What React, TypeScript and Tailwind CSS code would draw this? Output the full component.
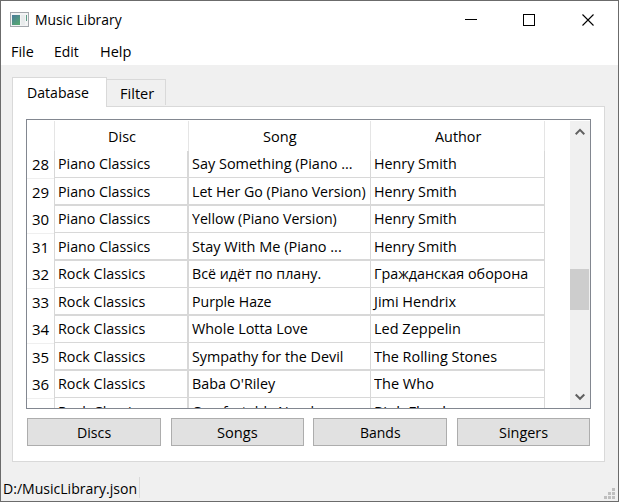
import { useLayoutEffect, useRef, useState } from "react";

// Text condensed horizontally so that it takes exactly `w` pixels.
function Fit({ w, children }: { w: number; children: string }) {
  const ref = useRef<HTMLSpanElement>(null);
  const [scale, setScale] = useState(1);
  useLayoutEffect(() => {
    if (ref.current) setScale(w / ref.current.offsetWidth);
  }, [w]);
  return (
    <span className="inline-block text-left align-top whitespace-nowrap" style={{ width: w }}>
      <span ref={ref} className="inline-block origin-left align-top" style={{ transform: `scaleX(${scale})` }}>
        {children}
      </span>
    </span>
  );
}

type Cell = [string, number];
const PIANO: Cell = ["Piano Classics", 92];
const ROCK: Cell = ["Rock Classics", 87];
const HENRY: Cell = ["Henry Smith", 83];

const rows: { n: string; disc: Cell; song: Cell; author: Cell }[] = [
  { n: "28", disc: PIANO, song: ["Say Something (Piano ...", 161], author: HENRY },
  { n: "29", disc: PIANO, song: ["Let Her Go (Piano Version)", 174], author: HENRY },
  { n: "30", disc: PIANO, song: ["Yellow (Piano Version)", 145], author: HENRY },
  { n: "31", disc: PIANO, song: ["Stay With Me (Piano ...", 150], author: HENRY },
  { n: "32", disc: ROCK, song: ["Всё идёт по плану.", 129], author: ["Гражданская оборона", 154] },
  { n: "33", disc: ROCK, song: ["Purple Haze", 80], author: ["Jimi Hendrix", 82] },
  { n: "34", disc: ROCK, song: ["Whole Lotta Love", 116], author: ["Led Zeppelin", 87] },
  { n: "35", disc: ROCK, song: ["Sympathy for the Devil", 151], author: ["The Rolling Stones", 123] },
  { n: "36", disc: ROCK, song: ["Baba O'Riley", 83], author: ["The Who", 60] },
  { n: "37", disc: ROCK, song: ["Comfortably Numb", 127], author: ["Pink Floyd", 72] },
];

const buttons: { label: string; w: number; cls: string }[] = [
  { label: "Discs", w: 34, cls: "w-[134px]" },
  { label: "Songs", w: 41, cls: "ml-[10px] w-[133px]" },
  { label: "Bands", w: 41, cls: "ml-[9px] w-[134px]" },
  { label: "Singers", w: 49, cls: "ml-[10px] w-[133px]" },
];

function TitleBar() {
  return (
    <div className="flex h-[37px] shrink-0 items-center pl-[9px]">
      <svg width="19" height="16" viewBox="0 0 19 16" shapeRendering="crispEdges">
        <defs>
          <linearGradient id="app" x1="0" y1="0" x2="0.6" y2="1">
            <stop offset="0" stopColor="#4a7a9b" />
            <stop offset="1" stopColor="#55a574" />
          </linearGradient>
        </defs>
        <rect x="0.5" y="0.5" width="18" height="14" fill="#f3f4f5" stroke="#a3a7ac" />
        <rect x="2" y="3" width="8" height="10" fill="url(#app)" />
        <rect x="11" y="3" width="4" height="10" fill="#e8ebec" />
        <rect x="16" y="3" width="1" height="6" fill="#5d9c86" />
      </svg>
      <span className="mb-[2px] ml-[6px]"><Fit w={87}>Music Library</Fit></span>
      <svg className="ml-auto mr-[23px]" width="130" height="12" viewBox="0 0 130 12" fill="none" stroke="#000">
        <path d="M0 5.5H12M58.5 0.5H69.5V11.5H58.5Z" shapeRendering="crispEdges" />
        <path d="M117.5 0.5L128.5 11.5M128.5 0.5L117.5 11.5" strokeWidth="1.1" />
      </svg>
    </div>
  );
}

function ScrollBar() {
  return (
    <div className="mt-px flex w-5 flex-col items-center bg-[#f0f0f0]">
      <svg className="mt-[7px]" width="10" height="8" viewBox="0 0 10 8" fill="none" stroke="#606060" strokeWidth="2">
        <path d="M0.7 6.2L5 1.9L9.3 6.2" />
      </svg>
      <div className="mt-[133px] mr-px h-[41px] w-[19px] bg-[#cdcdcd]" />
      <svg className="mt-auto mb-[7px]" width="10" height="8" viewBox="0 0 10 8" fill="none" stroke="#606060" strokeWidth="2">
        <path d="M0.7 1.5L5 5.8L9.3 1.5" />
      </svg>
    </div>
  );
}

function Table() {
  return (
    <div className="flex h-[290px] w-[565px] justify-between overflow-hidden border border-[#828790]">
      <div className="flex w-[518px] flex-col">
        <div className="mt-px flex h-[30px] shrink-0 pl-[27px] text-center leading-[31px]">
          <div className="w-[134px] border-l border-[#e5e5e5]"><Fit w={28}>Disc</Fit></div>
          <div className="w-[182px] border-l border-[#e5e5e5]"><Fit w={34}>Song</Fit></div>
          <div className="w-[175px] border-x border-[#e5e5e5]"><Fit w={46}>Author</Fit></div>
        </div>
        {rows.map((r, i) => {
          const thick = i % 2 === 1;
          const line = thick ? "h-[28px] border-b-2" : "h-[27px] border-b";
          return (
            <div key={r.n} className={`flex shrink-0 ${thick ? "leading-[26px]" : "leading-6"}`}>
              <div className={`w-[27px] pl-[5px] ${thick ? "border-t border-[#efefef]" : "pt-px"}`}>
                <Fit w={17}>{r.n}</Fit>
              </div>
              <div className={`${line} w-[133px] border-l border-[#d8d8d8] pl-[3px]`}><Fit w={r.disc[1]}>{r.disc[0]}</Fit></div>
              <div className={`${line} w-[183px] border-l-2 border-[#d8d8d8] pl-[3px]`}><Fit w={r.song[1]}>{r.song[0]}</Fit></div>
              <div className={`${line} w-[175px] border-x border-[#d8d8d8] pl-[3px]`}><Fit w={r.author[1]}>{r.author[0]}</Fit></div>
            </div>
          );
        })}
      </div>
      <ScrollBar />
    </div>
  );
}

export default function App() {
  return (
    <div className="flex h-[502px] w-[619px] flex-col overflow-hidden border border-[#6b6b6b] bg-[#f0f0f0] font-['Open_Sans','Noto_Sans',sans-serif] text-[15px] leading-5 text-black">
      <div className="h-[64px] shrink-0 bg-white">
        <TitleBar />
        <div className="flex pl-[10px] pt-[3px]">
          <span className="w-[43px]"><Fit w={23}>File</Fit></span>
          <span className="w-[46px]"><Fit w={25}>Edit</Fit></span>
          <Fit w={31}>Help</Fit>
        </div>
      </div>
      <div className="flex flex-col pl-[11px] pt-[12px]">
        <div className="flex h-[30px] items-start">
          <div className="relative z-10 -mb-px h-[30px] w-[95px] border border-b-0 border-[#d9d9d9] bg-white pl-[14px] pt-[4px]">
            <Fit w={62}>Database</Fit>
          </div>
          <div className="mt-[2px] h-[26px] w-[59px] border-r border-t border-[#d9d9d9] pl-[13px] pt-[3px]">
            <Fit w={34}>Filter</Fit>
          </div>
        </div>
        <div className="-mt-px h-[356px] w-[593px] border border-[#d9d9d9] bg-white pl-[13px] pt-[12px]">
          <Table />
          <div className="ml-px mt-[9px] flex">
            {buttons.map((b) => (
              <button key={b.label} className={`${b.cls} h-7 border border-[#adadad] bg-[#e1e1e1] text-center`}>
                <Fit w={b.w}>{b.label}</Fit>
              </button>
            ))}
          </div>
        </div>
      </div>
      <div className="flex flex-1 items-start justify-between pl-[2px] pt-[15px]">
        <div className="h-[21px] w-[137px] border-r border-[#d9d9d9] pt-px"><Fit w={134}>D:/MusicLibrary.json</Fit></div>
        <svg className="mr-[3px] mt-[11px]" width="11" height="11" fill="#bfbfbf" shapeRendering="crispEdges">
          <path d="M8 0h3v3h-3zM4 4h3v3h-3zM8 4h3v3h-3zM0 8h3v3h-3zM4 8h3v3h-3zM8 8h3v3h-3z" />
        </svg>
      </div>
    </div>
  );
}
